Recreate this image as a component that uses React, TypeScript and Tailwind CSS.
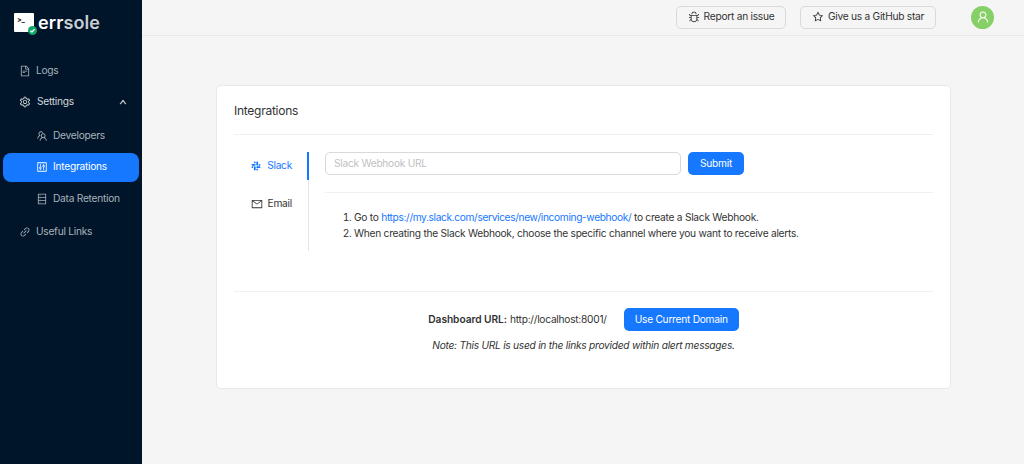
import {
  AiOutlineBug,
  AiOutlineControl,
  AiOutlineDatabase,
  AiOutlineFileText,
  AiOutlineLink,
  AiOutlineMail,
  AiOutlineSetting,
  AiOutlineSlack,
  AiOutlineStar,
  AiOutlineTeam,
  AiOutlineUp,
  AiOutlineUser,
} from "react-icons/ai";

function SideItem({ icon, label, sub, active }: { icon: React.ReactNode; label: string; sub?: boolean; active?: boolean }) {
  return (
    <div
      className={`flex h-[29px] items-center gap-[5px] rounded-lg text-[10.2px] ${sub ? "pl-[33px]" : "pl-[16px]"} ${
        active ? "bg-[#1677ff] text-white" : "text-[#a9b2bc]"
      }`}
    >
      {icon}
      <span>{label}</span>
    </div>
  );
}

export default function App() {
  return (
    <div className="flex h-[464px] w-[1024px] overflow-hidden bg-[#f5f5f5] font-['Inter',sans-serif] tracking-[-0.26px] text-[#333]">
      <aside className="w-[142px] shrink-0 bg-[#001529] px-[3px]">
        <div className="flex h-[44px] items-center pl-[11px] pt-[1px]">
          <div className="relative flex h-[19px] w-[20px] items-start rounded-[1px] bg-white pl-[3px] pt-[3px] text-[7px] font-bold leading-[8px] text-[#111]">
            &gt;_
            <span className="absolute -bottom-[3px] -right-[3px] flex h-[9px] w-[9px] items-center justify-center rounded-full bg-[#10a56b]">
              <svg viewBox="0 0 10 10" className="h-[7px] w-[7px]" fill="none" stroke="white" strokeWidth="1.8">
                <path d="M2 5.2 4.2 7.2 8 3" />
              </svg>
            </span>
          </div>
          <span className="ml-[4px] text-[18px] font-semibold leading-none tracking-[0.1px] text-white">
            err<span className="text-[#c8ced4]">sole</span>
          </span>
        </div>
        <div className="mt-[12px] flex flex-col">
          <SideItem icon={<AiOutlineFileText size={12} />} label="Logs" />
          <div className="mt-[2px] flex h-[29px] items-center gap-[6px] pl-[16px] text-[10.2px] text-[#d5d9dd]">
            <AiOutlineSetting size={12} />
            <span>Settings</span>
            <AiOutlineUp size={8} stroke="currentColor" strokeWidth={70} className="ml-auto mr-[12px]" />
          </div>
          <div className="mt-[5px] flex flex-col gap-[2.5px]">
            <SideItem sub icon={<AiOutlineTeam size={12} />} label="Developers" />
            <SideItem sub active icon={<AiOutlineControl size={12} />} label="Integrations" />
            <SideItem sub icon={<AiOutlineDatabase size={12} />} label="Data Retention" />
          </div>
          <div className="mt-[4.5px]">
            <SideItem icon={<AiOutlineLink size={12} />} label="Useful Links" />
          </div>
        </div>
      </aside>

      <div className="flex min-w-0 flex-1 flex-col">
        <header className="flex h-[36px] shrink-0 items-center border-b border-[#e8e8e8] pb-[1px]">
          <div className="ml-auto flex items-center">
            <button className="flex h-[23px] w-[110px] items-center justify-center gap-[4px] rounded-[5px] border border-[#d9d9d9] text-[10.2px] text-[#333]">
              <AiOutlineBug size={12} />
              Report an issue
            </button>
            <button className="ml-[14px] flex h-[23px] w-[136px] items-center justify-center gap-[4px] rounded-[5px] border border-[#d9d9d9] text-[10.2px] text-[#333]">
              <AiOutlineStar size={12} />
              Give us a GitHub star
            </button>
            <div className="ml-[35px] mr-[30px] flex h-[23px] w-[23px] items-center justify-center rounded-full bg-[#87d068] text-white">
              <AiOutlineUser size={14} />
            </div>
          </div>
        </header>

        <main className="px-[74px] pt-[49px]">
          <section className="h-[304px] w-[735px] rounded-[5px] border border-[#e8e8e8] bg-white px-[17px]">
            <h2 className="flex h-[49px] items-center border-b border-[#f0f0f0] pt-[1px] text-[12px] font-normal">Integrations</h2>
            <div className="mt-[17px] flex">
              <div className="h-[99px] w-[75px] shrink-0 border-r border-[#e5e5e5] text-[10.2px]">
                <div className="relative flex h-[28px] items-center justify-end gap-[5px] pr-[16px] text-[#1677ff]">
                  <AiOutlineSlack size={12} />
                  Slack
                  <span className="absolute -right-px top-0 h-full w-[2px] bg-[#1677ff]" />
                </div>
                <div className="mt-[10px] flex h-[28px] items-center justify-end gap-[5px] pr-[16px]">
                  <AiOutlineMail size={12} />
                  Email
                </div>
              </div>
              <div className="ml-[16px] min-w-0 flex-1">
                <div className="flex items-center border-b border-[#f0f0f0] pb-[17px]">
                  <input
                    placeholder="Slack Webhook URL"
                    className="h-[23px] w-[356px] rounded-[5px] border border-[#d9d9d9] px-[8px] pb-[1px] text-[10.2px] placeholder:text-[#bfbfbf]"
                  />
                  <button className="ml-[7px] h-[23px] w-[56px] rounded-[5px] bg-[#1677ff] text-[10.2px] text-white">Submit</button>
                </div>
                <ol className="mt-[17px] list-decimal pl-[29px] text-[10.2px] leading-[15.5px]">
                  <li>
                    Go to <a className="tracking-[-0.36px] text-[#1677ff]">https://my.slack.com/services/new/incoming-webhook/</a> to create a Slack Webhook.
                  </li>
                  <li>When creating the Slack Webhook, choose the specific channel where you want to receive alerts.</li>
                </ol>
              </div>
            </div>
            <div className="mt-[40px] border-t border-[#f0f0f0] pt-[16px] text-center text-[10.2px]">
              <div className="flex items-center justify-center">
                <span className="font-semibold tracking-[-0.05px]">Dashboard URL:</span>
                <span className="ml-[3px]">http://localhost:8001/</span>
                <button className="ml-[17px] h-[23px] w-[115px] rounded-[5px] bg-[#1677ff] text-white">Use Current Domain</button>
              </div>
              <p className="mt-[7px] italic">Note: This URL is used in the links provided within alert messages.</p>
            </div>
          </section>
        </main>
      </div>
    </div>
  );
}
